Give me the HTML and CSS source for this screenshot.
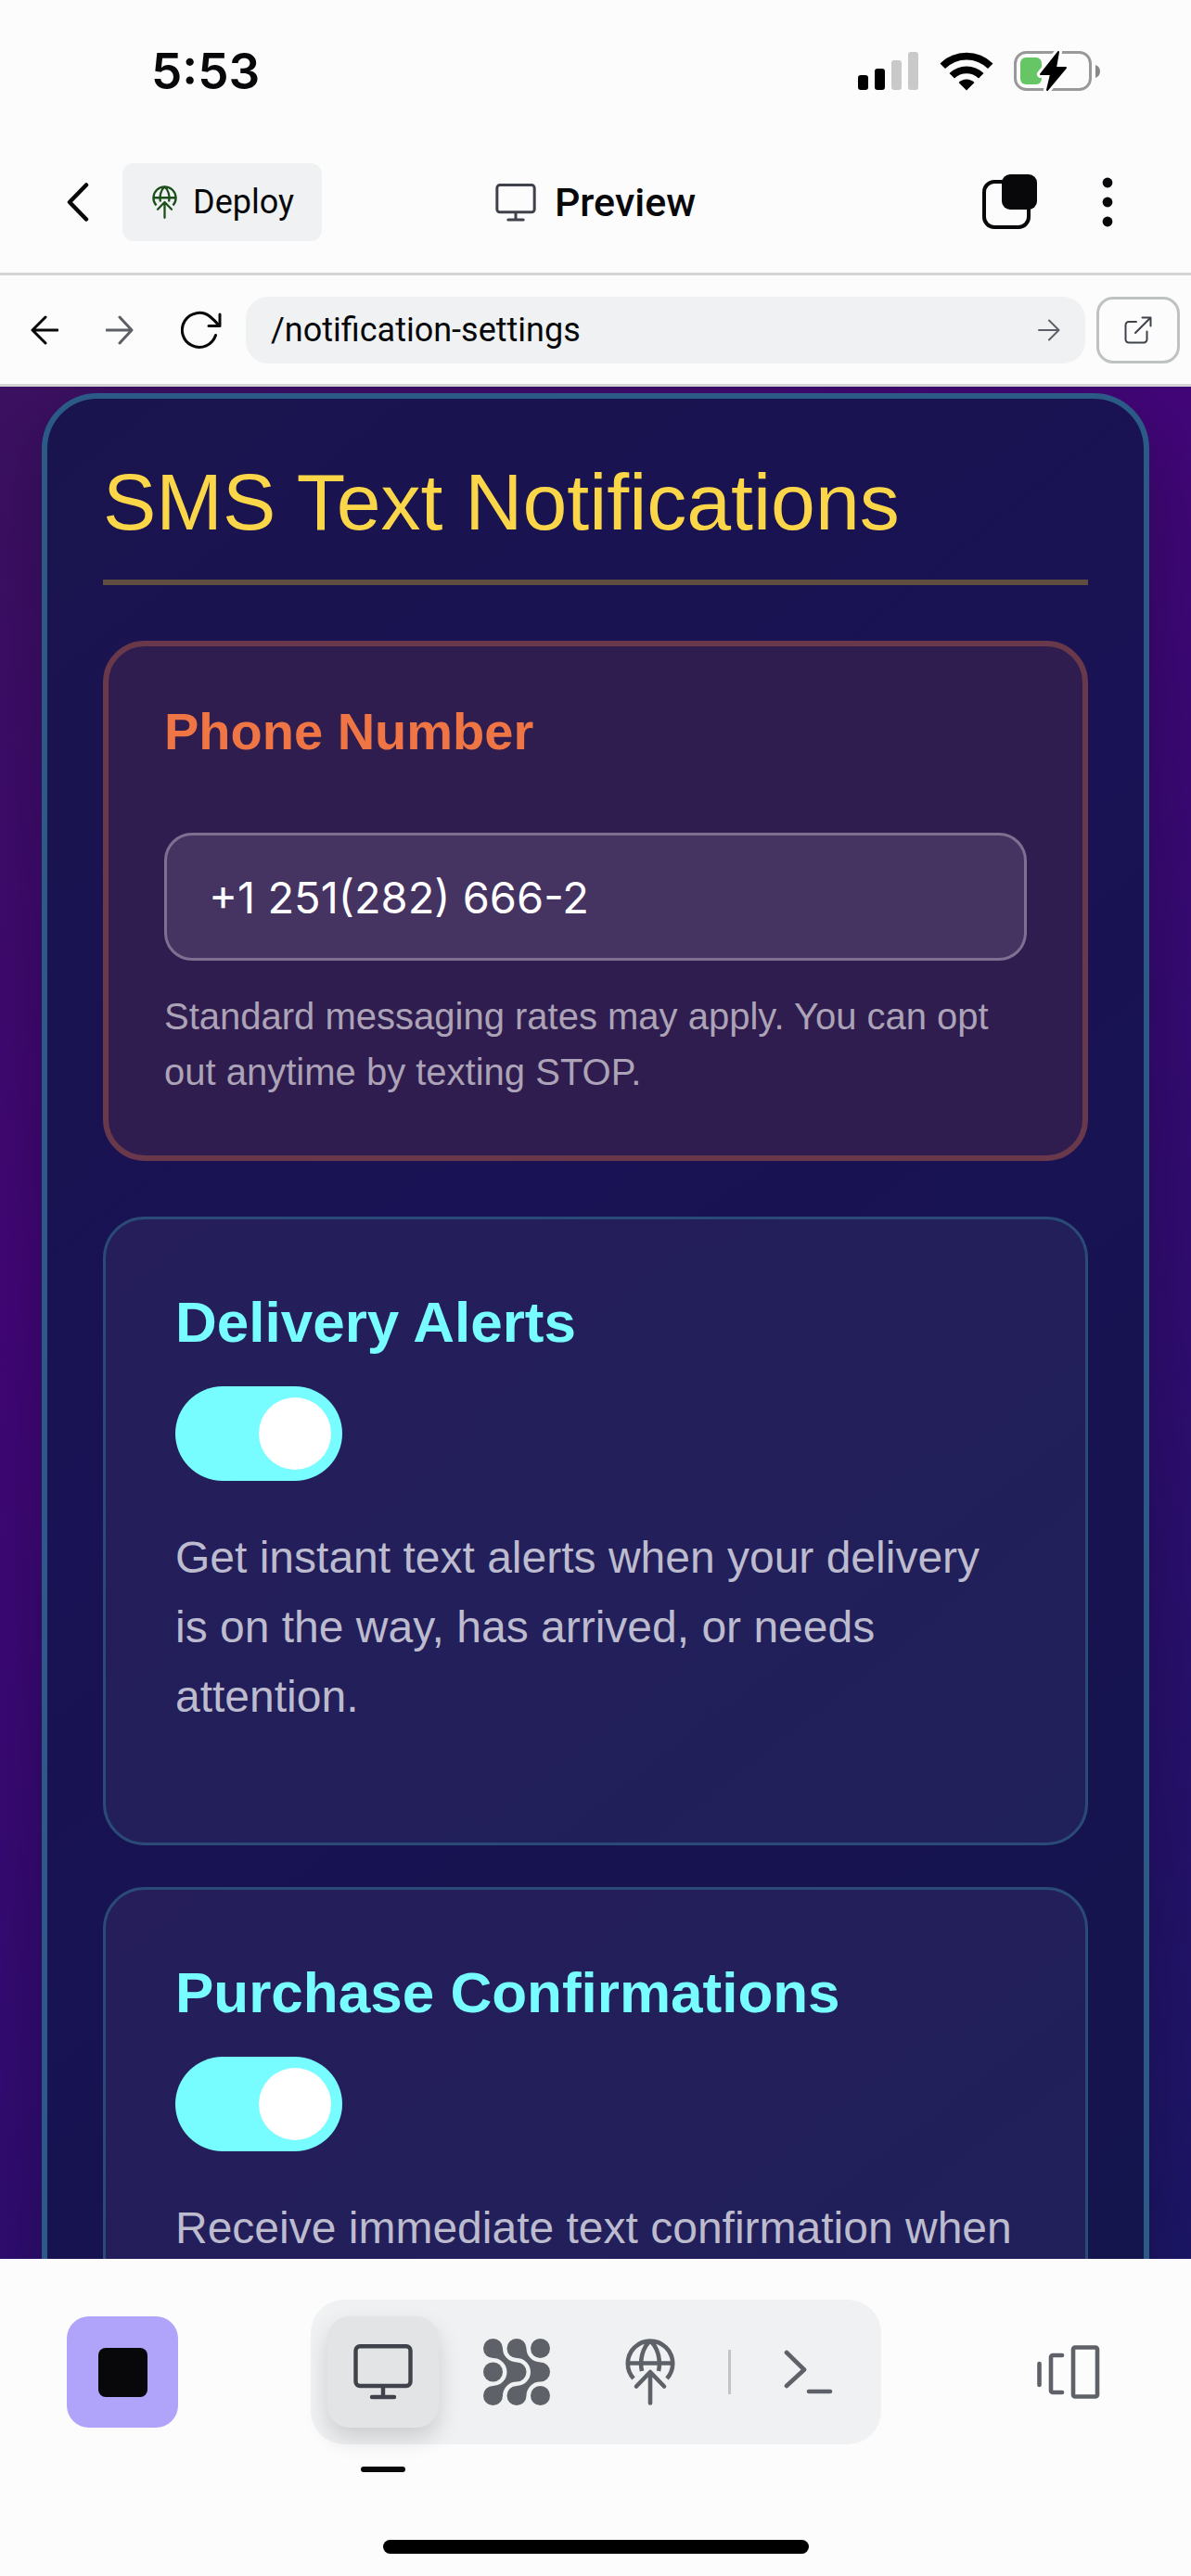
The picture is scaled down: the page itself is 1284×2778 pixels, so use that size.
FILE: index.html
```html
<!DOCTYPE html>
<html lang="en">
<head>
<meta charset="utf-8">
<meta name="viewport" content="width=device-width, initial-scale=1">
<title>Preview – Notification settings</title>
<link rel="stylesheet" href="styles.css">
</head>
<body>
<svg class="defs" width="0" height="0" aria-hidden="true">
  <symbol id="globe-up" viewBox="0 0 54 72">
    <path d="M9 43A24.200 24.200 0 1 1 45 43M2.500 26.500H51.500M18 35C15 22 20 8 27 2.500C34 8 39 22 36 35" fill="none" stroke="currentColor" stroke-width="4.600" stroke-linejoin="round"/>
    <path d="M27 69.500V37M12 51.500L27 36L42 51.500" fill="none" stroke="currentColor" stroke-width="4.600" stroke-linecap="round" stroke-linejoin="round"/>
  </symbol>
  <symbol id="monitor" viewBox="0 0 64 60">
    <path d="M7 2.300H57a4.500 4.500 0 0 1 4.500 4.500V40.500a4.500 4.500 0 0 1-4.500 4.500H7a4.500 4.500 0 0 1-4.500-4.500V6.800A4.500 4.500 0 0 1 7 2.300ZM32 45V57M20 57H44" fill="none" stroke="currentColor" stroke-width="4.400" stroke-linecap="round"/>
  </symbol>
</svg>

<div class="status">
  <span class="time">5:53</span>
  <div class="status-icons">
    <svg width="66" height="42" viewBox="0 0 66 42" aria-hidden="true">
      <rect x="0" y="25" width="11" height="16" rx="3"/><rect x="18" y="18" width="11" height="23" rx="3"/>
      <rect x="36" y="9" width="11" height="32" rx="3" fill="#c9c9c9"/><rect x="54" y="0" width="11" height="41" rx="3" fill="#c9c9c9"/>
    </svg>
    <svg width="58" height="42" viewBox="0 0 58 42" aria-hidden="true">
      <path d="M0.500 12.500A40.500 40.500 0 0 1 57.500 12.500L52 18A32.500 32.500 0 0 0 6 18Z"/>
      <path d="M10.500 23A26.500 26.500 0 0 1 47.500 23L42 28.500A18.500 18.500 0 0 0 16 28.500Z"/>
      <path d="M20.500 33A12 12 0 0 1 37.500 33L29 41.500Z"/>
    </svg>
    <svg width="94" height="46" viewBox="0 0 94 46" aria-hidden="true">
      <rect x="1.500" y="2.500" width="81" height="40" rx="12" fill="none" stroke="#999" stroke-width="3"/>
      <path d="M88 16Q93 18 93 23T88 30Z" fill="#888"/>
      <rect x="7" y="8" width="23" height="29" rx="6" fill="#66c565"/>
      <path d="M48 2L29 26H40L36 43L56 19H45Z" stroke="#fcfcfc" stroke-width="8" fill="#fcfcfc" stroke-linejoin="round"/>
      <path d="M48 2L29 26H40L36 43L56 19H45Z" stroke="#000" stroke-width="2" stroke-linejoin="round"/>
    </svg>
  </div>
</div>

<header class="topbar">
  <div class="topbar-left">
    <button class="icon-button" type="button" aria-label="Back"><svg width="24" height="42" viewBox="0 0 24 42"><path d="M21 2.500L3 21L21 39.500" fill="none" stroke="currentColor" stroke-width="4.500" stroke-linecap="round" stroke-linejoin="round"/></svg></button>
    <button class="deploy" type="button"><svg width="27" height="36"><use href="#globe-up"/></svg>Deploy</button>
  </div>
  <h1 class="page-name"><svg width="44" height="41"><use href="#monitor"/></svg>Preview</h1>
  <div class="topbar-right">
    <button class="icon-button" type="button" aria-label="Tabs"><svg width="60" height="60" viewBox="0 0 60 60"><rect x="2" y="8" width="48" height="49" rx="11" fill="none" stroke="currentColor" stroke-width="4"/><rect x="21" y="0" width="38" height="38" rx="9" fill="currentColor"/></svg></button>
    <button class="icon-button" type="button" aria-label="More"><svg width="12" height="54" viewBox="0 0 12 54"><g fill="currentColor"><circle cx="6" cy="6" r="5.400"/><circle cx="6" cy="27" r="5.400"/><circle cx="6" cy="48" r="5.400"/></g></svg></button>
  </div>
</header>

<nav class="urlbar" aria-label="Preview navigation">
  <div class="history">
    <button class="icon-button" type="button" aria-label="Go back"><svg width="30" height="32" viewBox="0 0 30 32"><path d="M29 16H2M16 2L2 16L16 30" class="line"/></svg></button>
    <button class="icon-button muted" type="button" aria-label="Go forward"><svg width="30" height="32" viewBox="0 0 30 32"><path d="M1 16H28M15 2L28 16L15 30" class="line"/></svg></button>
    <button class="icon-button" type="button" aria-label="Reload"><svg width="44" height="42" viewBox="0 0 44 42"><path d="M37.500 26.500A18.500 18.500 0 1 1 31.500 6.500Q36 10 41.500 16.500M42 4V16.500H30" class="line"/></svg></button>
  </div>
  <div class="address">
    <input class="address-input" type="text" value="/notification-settings" aria-label="Path">
    <button class="icon-button muted" type="button" aria-label="Go"><svg width="24" height="24" viewBox="0 0 24 24"><path d="M1 12H22M12 1.500L22.500 12L12 22.500" class="line thin"/></svg></button>
  </div>
  <button class="open" type="button" aria-label="Open in new tab"><svg width="30" height="30" viewBox="0 0 30 30"><path d="M13 6H5a3.500 3.500 0 0 0-3.500 3.500V25A3.500 3.500 0 0 0 5 28.500H21A3.500 3.500 0 0 0 24.500 25V16.500M19.500 1.500H28.500V10.500M28.500 1.500L12 18" class="line thin"/></svg></button>
</nav>

<main class="preview">
  <section class="panel">
    <h2 class="panel-title">SMS Text Notifications</h2>
    <div class="phone card">
      <label class="phone-label" for="phone">Phone Number</label>
      <input class="phone-input" id="phone" type="tel" value="+1 251(282) 666-2">
      <p class="phone-note">Standard messaging rates may apply. You can opt out anytime by texting STOP.</p>
    </div>
    <div class="options">
      <div class="option card">
        <label class="option-title" for="delivery">Delivery Alerts</label>
        <input class="toggle" id="delivery" type="checkbox" role="switch" checked>
        <p class="option-text">Get instant text alerts when your delivery is on the way, has arrived, or needs attention.</p>
      </div>
      <div class="option card">
        <label class="option-title" for="purchase">Purchase Confirmations</label>
        <input class="toggle" id="purchase" type="checkbox" role="switch" checked>
        <p class="option-text">Receive immediate text confirmation when</p>
      </div>
    </div>
  </section>
</main>

<footer class="dock">
  <div class="dock-row">
    <button class="stop" type="button" aria-label="Stop"><svg width="53" height="53" viewBox="0 0 53 53"><rect width="53" height="53" rx="8" fill="#08080a"/></svg></button>
    <div class="tools">
      <button class="tool active" type="button" aria-label="Preview"><svg width="64" height="60"><use href="#monitor"/></svg></button>
      <button class="tool" type="button" aria-label="Apps"><svg width="72" height="72" viewBox="0 0 72 72">
        <g fill="currentColor">
          <path id="wave" d="M21 10.500A15 15 0 0 0 36 25.500A10.500 10.500 0 0 1 36 46.500A15 15 0 0 0 21 61.500A10.500 10.500 0 1 1 10.500 51A15 15 0 0 0 10.500 21A10.500 10.500 0 1 1 21 10.500Z"/>
          <use href="#wave" x="25.500"/>
          <circle cx="61.500" cy="10.500" r="10.500"/><circle cx="10.500" cy="36" r="10.500"/><circle cx="61.500" cy="61.500" r="10.500"/>
        </g></svg></button>
      <button class="tool" type="button" aria-label="Deployments"><svg width="54" height="72"><use href="#globe-up"/></svg></button>
      <span class="divider"></span>
      <button class="tool" type="button" aria-label="Shell"><svg width="54" height="48" viewBox="0 0 54 48"><path d="M3 3L22 21.500L3 39M27 45H50" fill="none" stroke="currentColor" stroke-width="4.600" stroke-linecap="round" stroke-linejoin="round"/></svg></button>
    </div>
    <button class="tool" type="button" aria-label="Switch panes"><svg width="68" height="58" viewBox="0 0 68 58"><path d="M2.500 20V43M27 11H17a2 2 0 0 0-2 2V49a2 2 0 0 0 2 2H27M41 2.500H63a2 2 0 0 1 2 2V53.500a2 2 0 0 1-2 2H41a2 2 0 0 1-2-2V4.500A2 2 0 0 1 41 2.500Z" fill="none" stroke="currentColor" stroke-width="4.600" stroke-linecap="round"/></svg></button>
  </div>
  <div class="home-bar"></div>
</footer>
</body>
</html>
```
FILE: styles.css
```css
* { box-sizing: border-box; }

body {
  margin: 0;
  height: 100vh;
  display: flex;
  flex-direction: column;
  background: #fcfcfc;
  color: #08080a;
  font-family: Roboto, "Noto Sans", sans-serif;
  overflow: hidden;
}

button, input { font: inherit; color: inherit; margin: 0; }
svg { display: block; flex: none; }
.defs { position: absolute; }
h1, h2, p { margin: 0; }

.line { fill: none; stroke: currentColor; stroke-width: 3; stroke-linecap: round; stroke-linejoin: round; }
.thin { stroke-width: 2; }

.status {
  flex: none;
  display: flex;
  align-items: center;
  justify-content: space-between;
  height: 152px;
  padding: 2px 97px 0 163px;
}
.time { font: 600 53px/60px Inter, sans-serif; }
.status-icons { display: flex; align-items: center; gap: 22px; }

.topbar {
  flex: none;
  display: grid;
  grid-template-columns: 1fr auto 1fr;
  align-items: center;
  height: 145px;
  padding: 0 72px 10px;
  border-bottom: 3px solid #d3d5d5;
}
.icon-button {
  display: flex;
  align-items: center;
  justify-content: center;
  padding: 0;
  border: 0;
  background: none;
}
.muted { color: #5c5f66; }
.topbar-left { display: flex; align-items: center; gap: 36px; }
.deploy {
  display: flex;
  align-items: center;
  gap: 17px;
  height: 84px;
  padding: 0 30px 0 32px;
  border: 0;
  border-radius: 12px;
  background: #eff1f3;
  font-size: 36px;
}
.deploy svg { color: #1d4f1a; }
.page-name { display: flex; align-items: center; gap: 20px; font-size: 43px; font-weight: 500; line-height: 48px; }
.page-name svg { color: #3f424a; }
.topbar-right { display: flex; align-items: center; justify-content: flex-end; gap: 69px; padding-right: 12px; }

.urlbar {
  flex: none;
  display: flex;
  align-items: center;
  height: 120px;
  padding: 0 12px 0 33px;
  border-bottom: 3px solid #d3d5d5;
  gap: 12px;
}
.history { display: flex; gap: 51px; padding-right: 14px; }
.address {
  flex: 1;
  display: flex;
  align-items: center;
  height: 72px;
  padding: 0 27px;
  border-radius: 24px;
  background: #eff1f3;
}
.address-input { flex: 1; min-width: 0; padding: 0; border: 0; background: none; font-size: 36px; }
.open {
  display: flex;
  align-items: center;
  justify-content: center;
  width: 90px;
  height: 72px;
  padding: 0;
  border: 3px solid #bfc2c3;
  border-radius: 18px;
  background: none;
  color: #3f424a;
}

.preview {
  flex: 1;
  min-height: 0;
  padding: 7px 45px 0;
  overflow: hidden;
  background: linear-gradient(142deg, #3c1162 0%, #43067a 33%, #300d73 67%, #1c1768 100%);
  font-family: "Liberation Sans", Arial, sans-serif;
}
.panel {
  padding: 60px;
  border: 6px solid #2a5a85;
  border-radius: 60px;
  background: linear-gradient(142deg, #1a144e 0%, #191254 40%, #14154d 100%);
  box-shadow: 0 24px 96px rgba(0, 0, 0, 0.3);
}
.panel-title {
  padding-bottom: 33px;
  border-bottom: 6px solid #5f4e40;
  color: #fad648;
  font-size: 86px;
  font-weight: 400;
  line-height: 102px;
}
.card { border-radius: 45px; }
.phone {
  display: flex;
  flex-direction: column;
  margin: 60px 0;
  padding: 60px;
  border: 6px solid #69384a;
  background: #2f1d4f;
}
.phone-label { margin-bottom: 78px; color: #ef7545; font-size: 56px; font-weight: 700; line-height: 63px; }
.phone-input {
  height: 138px;
  padding: 0 45px;
  border: 3px solid #7f7092;
  border-radius: 30px;
  background: #453362;
  color: #fff;
  font: 400 47px/60px Inter, sans-serif;
}
.phone-note { margin-top: 30px; color: #aca3b7; font-size: 40px; line-height: 60px; }

.options { display: flex; flex-direction: column; gap: 45px; }
.option {
  display: flex;
  flex-direction: column;
  align-items: flex-start;
  padding: 75px 75px 120px;
  border: 3px solid #2a4b78;
  background: linear-gradient(142deg, #251e5b, #20205a);
}
.option-title { margin-bottom: 33px; color: #77fcff; font-size: 62px; font-weight: 700; line-height: 72px; }
.toggle {
  appearance: none;
  display: flex;
  justify-content: flex-end;
  width: 180px;
  height: 102px;
  margin-bottom: 45px;
  padding: 12px;
  border-radius: 51px;
  background: #77fcff;
}
.toggle::before { content: ""; width: 78px; height: 78px; border-radius: 50%; background: #fff; }
.option-text { color: #bdbbce; font-size: 48px; line-height: 75px; }

.dock {
  flex: none;
  display: flex;
  flex-direction: column;
  align-items: center;
  justify-content: space-between;
  height: 342px;
  padding: 44px 0 24px;
}
.dock-row {
  align-self: stretch;
  display: flex;
  align-items: center;
  justify-content: space-between;
  padding: 0 72px;
}
.stop, .tool {
  position: relative;
  display: flex;
  align-items: center;
  justify-content: center;
  width: 120px;
  height: 120px;
  padding: 0;
  border: 0;
  border-radius: 24px;
  background: none;
  color: #5e6168;
}
.stop { background: #afa3fa; }
.tools {
  display: flex;
  align-items: center;
  gap: 24px;
  padding: 18px;
  border-radius: 36px;
  background: #eff1f3;
}
.active { background: #e3e4e6; color: #3f424a; box-shadow: 0 12px 24px rgba(0, 0, 0, 0.15); }
.active::after {
  content: "";
  position: absolute;
  top: 162px;
  left: 36px;
  width: 48px;
  height: 6px;
  border-radius: 3px;
  background: #08080a;
}
.divider { width: 3px; height: 48px; background: #c2c4c6; }
.home-bar { width: 459px; height: 15px; border-radius: 8px; background: #000; }
```
